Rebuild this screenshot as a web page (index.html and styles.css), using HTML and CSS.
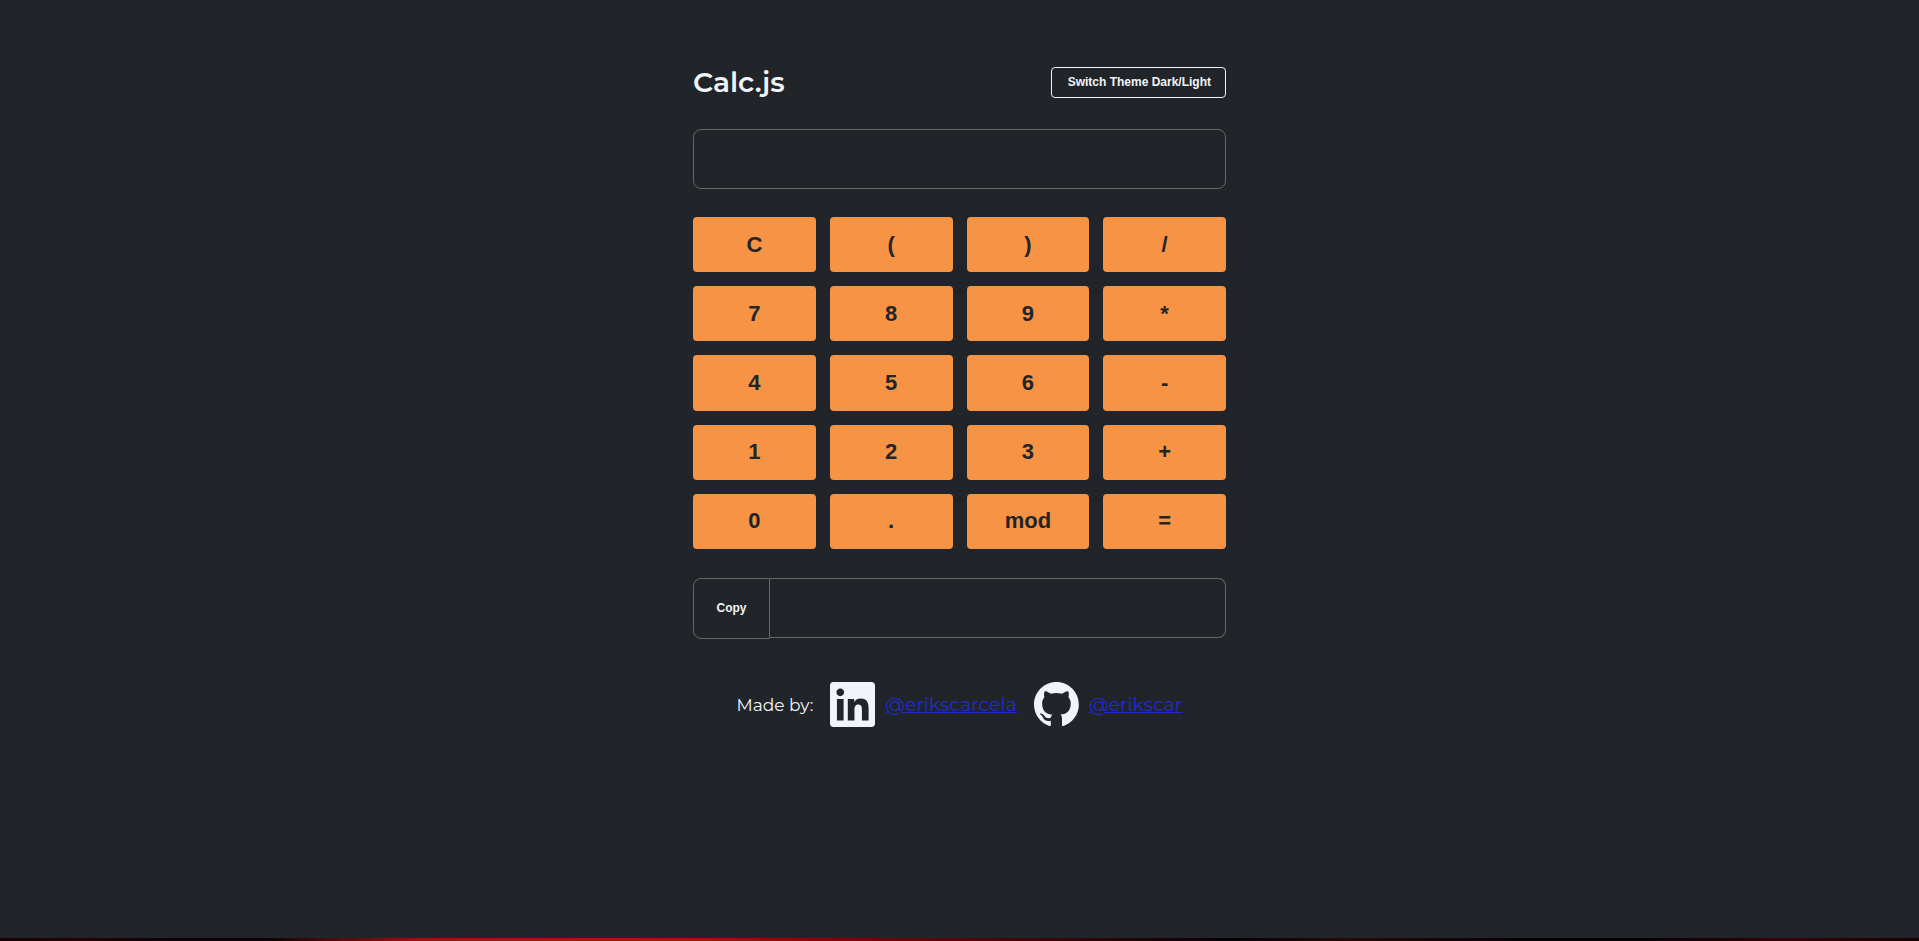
FILE: index.html
```html
<!DOCTYPE html>
<html lang="en">
<head>
<meta charset="utf-8">
<meta name="viewport" content="width=device-width, initial-scale=1">
<title>Calc.js</title>
<link rel="stylesheet" href="styles.css">
</head>
<body>
<main class="calculator">
  <header class="header">
    <h1 class="title">Calc.js</h1>
    <button class="theme-button" type="button">Switch Theme Dark/Light</button>
  </header>
  <input class="field" type="text" aria-label="Expression">
  <div class="keys">
    <button class="key" type="button">C</button>
    <button class="key" type="button">(</button>
    <button class="key" type="button">)</button>
    <button class="key" type="button">/</button>
    <button class="key" type="button">7</button>
    <button class="key" type="button">8</button>
    <button class="key" type="button">9</button>
    <button class="key" type="button">*</button>
    <button class="key" type="button">4</button>
    <button class="key" type="button">5</button>
    <button class="key" type="button">6</button>
    <button class="key" type="button">-</button>
    <button class="key" type="button">1</button>
    <button class="key" type="button">2</button>
    <button class="key" type="button">3</button>
    <button class="key" type="button">+</button>
    <button class="key" type="button">0</button>
    <button class="key" type="button">.</button>
    <button class="key" type="button">mod</button>
    <button class="key" type="button">=</button>
  </div>
  <div class="result">
    <button class="copy-button" type="button">Copy</button>
    <input class="field field-result" type="text" aria-label="Result" readonly>
  </div>
  <footer class="credits">
    <span class="made-by">Made by:</span>
    <div class="profile">
      <svg class="icon" viewBox="0 32 448 448" aria-hidden="true"><path fill="currentColor" d="M416 32H31.9C14.3 32 0 46.5 0 64.3v383.4C0 465.5 14.3 480 31.9 480H416c17.6 0 32-14.5 32-32.3V64.3c0-17.8-14.4-32.3-32-32.3zM135.4 416H69V202.2h66.5V416zm-33.2-243c-21.3 0-38.5-17.3-38.5-38.5S80.9 96 102.2 96c21.2 0 38.5 17.3 38.5 38.5 0 21.3-17.2 38.5-38.5 38.5zm282.1 243h-66.4V312c0-24.8-.5-56.7-34.5-56.7-34.6 0-39.9 27-39.9 54.9V416h-66.4V202.2h63.7v29.2h.9c8.9-16.8 30.6-34.5 62.9-34.5 67.2 0 79.7 44.3 79.7 101.9V416z"/></svg>
      <a class="link" href="#linkedin">@erikscarcela</a>
    </div>
    <div class="profile">
      <svg class="icon" viewBox="0 0 98 98" aria-hidden="true"><path fill="currentColor" d="M48.854 0C21.839 0 0 22 0 49.217c0 21.756 13.993 40.172 33.405 46.69 2.427.49 3.316-1.059 3.316-2.362 0-1.141-.08-5.052-.08-9.127-13.59 2.934-16.42-5.867-16.42-5.867-2.184-5.704-5.42-7.17-5.42-7.17-4.448-3.015.324-3.015.324-3.015 4.934.326 7.523 5.052 7.523 5.052 4.367 7.496 11.404 5.378 14.235 4.074.404-3.178 1.699-5.378 3.074-6.6-10.839-1.141-22.243-5.378-22.243-24.283 0-5.378 1.94-9.778 5.014-13.2-.485-1.222-2.184-6.275.486-13.038 0 0 4.125-1.304 13.426 5.052a46.97 46.97 0 0 1 12.214-1.63c4.125 0 8.33.571 12.213 1.63 9.302-6.356 13.427-5.052 13.427-5.052 2.67 6.763.97 11.816.485 13.038 3.155 3.422 5.015 7.822 5.015 13.2 0 18.905-11.404 23.06-22.324 24.283 1.78 1.548 3.316 4.481 3.316 9.126 0 6.6-.08 11.897-.08 13.526 0 1.304.89 2.853 3.316 2.364 19.412-6.52 33.405-24.935 33.405-46.691C97.707 22 75.788 0 48.854 0z"/></svg>
      <a class="link" href="#github">@erikscar</a>
    </div>
  </footer>
</main>
<div class="strip"></div>
</body>
</html>
```
FILE: styles.css
```css
* {
  box-sizing: border-box;
}

body {
  margin: 0;
  min-height: 100vh;
  display: flex;
  flex-direction: column;
  background: #212529;
  color: #f1f5f9;
  font-family: Montserrat, Inter, sans-serif;
}

button {
  font-family: Arial, "Liberation Sans", sans-serif;
  font-weight: 700;
  cursor: pointer;
}

.calculator {
  flex: 1;
  width: 100%;
  max-width: 533px;
  margin: 0 auto;
  padding-top: 64px;
}

.header {
  display: flex;
  justify-content: space-between;
  align-items: center;
  margin-bottom: 28px;
}

.title {
  margin: 0;
  font-size: 28px;
  line-height: 37px;
  font-weight: 600;
}

.theme-button {
  height: 31px;
  padding: 0 14px 2px 16px;
  border: 1px solid #f1f5f9;
  border-radius: 4px;
  background: transparent;
  color: #f1f5f9;
  font-size: 12px;
}

.field {
  display: block;
  width: 100%;
  height: 60px;
  padding: 0 16px;
  border: 1px solid #666;
  border-radius: 8px;
  background: transparent;
  color: #f1f5f9;
  font-family: inherit;
  font-size: 22px;
  outline: none;
}

.keys {
  display: grid;
  grid-template-columns: repeat(4, 1fr);
  grid-auto-rows: 1fr;
  gap: 14px;
  min-height: 332px;
  margin: 28px 0 29px;
}

.key {
  padding: 0;
  border: 0;
  border-radius: 4px;
  background: #f79344;
  color: #212529;
  font-size: 22px;
}

.result {
  display: flex;
  align-items: flex-start;
}

.copy-button {
  flex: none;
  width: 77px;
  height: 61px;
  padding: 0 0 2px;
  border: 1px solid #666;
  border-radius: 8px 0 0 8px;
  background: transparent;
  color: #f1f5f9;
  font-size: 12px;
}

.field-result {
  flex: 1;
  min-width: 0;
  border-left: 0;
  border-radius: 0 8px 8px 0;
}

.credits {
  display: flex;
  flex-wrap: wrap;
  justify-content: center;
  align-items: center;
  gap: 17px;
  margin-top: 43px;
}

.made-by {
  font-size: 17px;
}

.profile {
  display: flex;
  align-items: center;
  gap: 10px;
}

.icon {
  display: block;
  width: 45px;
  height: 45px;
}

.link {
  color: #1f2ccf;
  font-size: 19px;
}

.strip {
  height: 3px;
  background: linear-gradient(90deg, #170003 0%, #280206 4%, #0c0204 9%, #100204 14%, #4a090b 17%, #a01010 22%, #b81010 32%, #b00c0c 37%, #8c0608 42%, #5a0306 50%, #300406 57%, #050104 64%, #2a0808 70%, #080104 79%, #080104 86%, #380004 93%, #180003 100%);
}
```
